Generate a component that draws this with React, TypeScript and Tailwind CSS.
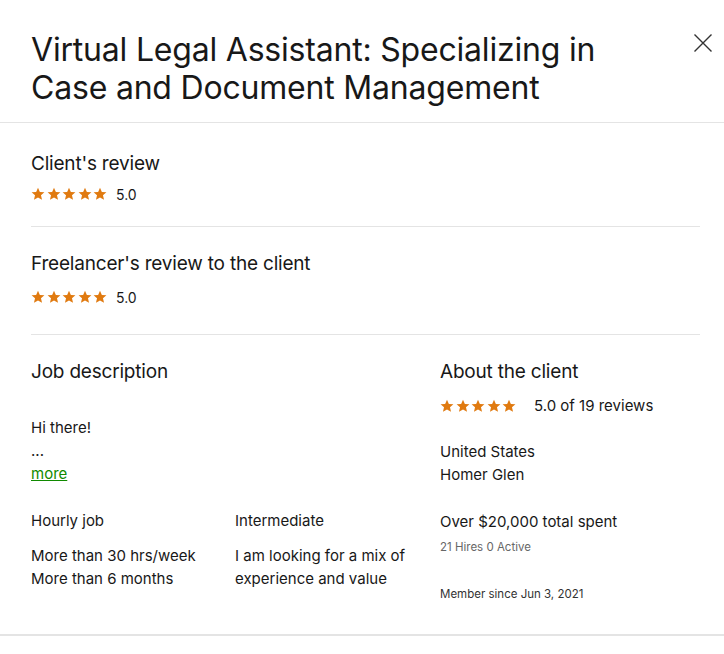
const Stars = () => (
  <div className="flex items-center gap-[1.5px]">
    {[0, 1, 2, 3, 4].map((i) => (
      <svg key={i} width="14" height="14" viewBox="0 0 24 24" fill="#e07a10">
        <path d="M12 1.2l3.2 7.2 7.8.7-5.9 5.2 1.8 7.7L12 18.1l-6.9 3.9 1.8-7.7L1 9.1l7.8-.7z" />
      </svg>
    ))}
  </div>
);

const App = () => {
  return (
    <div className="w-[724px] min-h-[654px] bg-white text-[#181818]" style={{ fontFamily: 'Inter, "Liberation Sans", sans-serif' }}>
      {/* Header */}
      <div className="flex items-start justify-between pl-[31px] pr-[12px] pt-[31px] pb-[15px] border-b border-[#e4e4e4]">
        <h1 className="text-[32px] leading-[38px] font-normal tracking-[-0.2px]">
          Virtual Legal Assistant: Specializing in
          <br />
          Case and Document Management
        </h1>
        <button className="mt-[3px] text-[#333]">
          <svg width="18" height="18" viewBox="0 0 18 18" stroke="currentColor" strokeWidth="1.4" fill="none">
            <path d="M0.5 0.5L17.5 17.5M17.5 0.5L0.5 17.5" />
          </svg>
        </button>
      </div>

      <div className="pl-[31px] pr-[24px]">
        {/* Client's review */}
        <div className="pt-[28px] pb-[22px] border-b border-[#e4e4e4]">
          <h2 className="text-[19px] leading-[26px] tracking-[-0.2px]">Client's review</h2>
          <div className="flex items-center gap-[9px] mt-[7px] h-[20px]">
            <Stars />
            <span className="text-[14px]">5.0</span>
          </div>
        </div>

        {/* Freelancer's review */}
        <div className="pt-[24px] pb-[27px] border-b border-[#e4e4e4]">
          <h2 className="text-[19px] leading-[26px] tracking-[-0.2px]">Freelancer's review to the client</h2>
          <div className="flex items-center gap-[9px] mt-[10px] h-[20px]">
            <Stars />
            <span className="text-[14px]">5.0</span>
          </div>
        </div>

        {/* Job + client */}
        <div className="flex pt-[24px] pb-[32px]">
          <div className="w-[409px]">
            <h2 className="text-[19px] leading-[26px] tracking-[-0.2px]">Job description</h2>
            <div className="mt-[31px] text-[15px] leading-[23px]">
              <p>Hi there!</p>
              <p>...</p>
              <a href="#" className="text-[#108a00] underline">more</a>
            </div>
            <div className="grid grid-cols-[204px_1fr] mt-[24px] text-[15px] leading-[23px]">
              <p>Hourly job</p>
              <p>Intermediate</p>
              <div className="mt-[12px]">
                <p>More than 30 hrs/week</p>
                <p>More than 6 months</p>
              </div>
              <div className="mt-[12px]">
                <p>I am looking for a mix of</p>
                <p>experience and value</p>
              </div>
            </div>
          </div>

          <div className="flex-1">
            <h2 className="text-[19px] leading-[26px] tracking-[-0.2px]">About the client</h2>
            <div className="flex items-center gap-[18px] mt-[11px] h-[20px]">
              <Stars />
              <span className="text-[15px]">5.0 of 19 reviews</span>
            </div>
            <div className="mt-[24px] text-[15px] leading-[23px]">
              <p>United States</p>
              <p>Homer Glen</p>
            </div>
            <p className="mt-[24px] text-[15px] leading-[23px]">Over $20,000 total spent</p>
            <p className="mt-[6px] text-[11.5px] leading-[16px] text-[#676767]">21 Hires 0 Active</p>
            <p className="mt-[31px] text-[11.5px] leading-[16px] text-[#333]">Member since Jun 3, 2021</p>
          </div>
        </div>
      </div>
      <div className="border-b-2 border-[#e4e4e4]" />
    </div>
  );
};

export default App;
